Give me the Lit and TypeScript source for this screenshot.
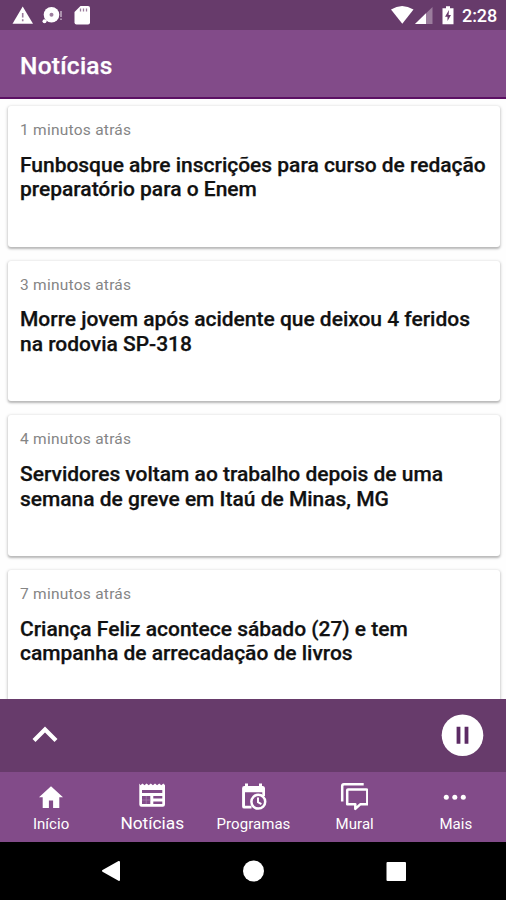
import { LitElement, html, css, svg } from "lit";
import { customElement } from "lit/decorators.js";
import { classMap } from "lit/directives/class-map.js";

const news = [
  { time: "1 minutos atrás", lines: ["Funbosque abre inscrições para curso de redação", "preparatório para o Enem"] },
  { time: "3 minutos atrás", lines: ["Morre jovem após acidente que deixou 4 feridos", "na rodovia SP-318"] },
  { time: "4 minutos atrás", lines: ["Servidores voltam ao trabalho depois de uma", "semana de greve em Itaú de Minas, MG"] },
  { time: "7 minutos atrás", lines: ["Criança Feliz acontece sábado (27) e tem", "campanha de arrecadação de livros"] },
];

const home = svg`<path d="M14 3.2 2 14.2h3.7V25h6.2v-7.5h4.2V25h6.2V14.2H26Z" fill="#fff"/>`;
const paper = svg`<path fill-rule="evenodd" fill="#fff" d="M1.300 .5l1.200 1.800 2-1.800 2 1.800 2.100-1.800 2.100 1.800 2.100-1.800 2.100 1.800 2.100-1.800 2.100 1.800 2.100-1.800 2.100 1.800 2.100-1.800 1.300 1.800L27 .5V21.500a2.200 2.200 0 0 1-2.200 2.200H3.500A2.200 2.200 0 0 1 1.300 21.500ZM4 7v3h20.300V7ZM4 13v8h8.300v-8ZM15.300 13v2.600h9V13ZM15.300 18.600v2.400h9v-2.400Z"/><path d="M4 17h8.300M8.200 13v8" stroke="#a57aab" stroke-width=".8"/>`;
const calendar = svg`<path fill-rule="evenodd" fill="#fff" d="M6 .5h3v2.500h11V.5h3v2.500h1A2.200 2.200 0 0 1 26 5.200V13h-2.700V9.200H6V22.800h6.500v2.800H5.300A2.200 2.200 0 0 1 3.100 23.400V5.200A2.200 2.200 0 0 1 5.300 3H6Z"/><circle cx="19.300" cy="18.700" r="6.900" fill="#824b89" stroke="#fff" stroke-width="2.500"/><path d="M19 14.400v4.800l3.400 1.900" fill="none" stroke="#fff" stroke-width="2"/>`;
const chat = svg`<path d="M2.200 18.500V3a1.700 1.700 0 0 1 1.700-1.700H23.700" fill="none" stroke="#fff" stroke-width="2.500"/><path d="M8 6.400h18.500a.8.8 0 0 1 .8.800V21.300H20.200L15.300 25.800v-4.500H7.200V7.200a.8.8 0 0 1 .8-.8Z" fill="none" stroke="#fff" stroke-width="2.500" stroke-linejoin="round"/>`;
const dots = svg`<circle cx="5.300" cy="14.200" r="2.500" fill="#fff"/><circle cx="13.800" cy="14.200" r="2.500" fill="#fff"/><circle cx="22.300" cy="14.200" r="2.500" fill="#fff"/>`;

const tabs = [
  { label: "Início", icon: home },
  { label: "Notícias", icon: paper, active: true },
  { label: "Programas", icon: calendar },
  { label: "Mural", icon: chat },
  { label: "Mais", icon: dots },
];

@customElement("news-card")
class NewsCard extends LitElement {
  static properties = { item: { attribute: false } };
  declare item: { time: string; lines: string[] };
  static styles = css`
    :host { display: block; box-sizing: border-box; height: 140.700px; padding: 13px 12px 0; background: #fff; border-radius: 3px; box-shadow: 0 1px 3px 1px rgba(0,0,0,.14), 0 1.500px 2px rgba(0,0,0,.16); }
    .time { font-size: 15.500px; line-height: 22px; letter-spacing: .25px; color: #858585; white-space: nowrap; }
    h2 { margin: 11.500px 0 0; font-size: 21px; line-height: 24.700px; font-weight: 500; letter-spacing: -.02px; color: #111; -webkit-text-stroke: .25px #111; white-space: nowrap; }
    h2 span { display: block; }
  `;
  render() {
    return html`<div class="time">${this.item.time}</div><h2>${this.item.lines.map((l) => html`<span>${l}</span>`)}</h2>`;
  }
}

@customElement("app-root")
class AppRoot extends LitElement {
  static styles = css`
    :host { display: flex; flex-direction: column; width: 506px; height: 900px; overflow: hidden; background: #fff; font-family: Roboto, sans-serif; color: #fff; }
    svg { display: block; }
    .status { flex: none; height: 30px; background: #673b6b; display: flex; justify-content: space-between; }
    .clock { width: 35px; font-size: 18px; line-height: 32px; font-weight: 500; letter-spacing: -.1px; white-space: nowrap; }
    .right { display: flex; width: 116px; }
    header { flex: none; box-sizing: border-box; height: 69px; padding-left: 20px; background: #824b89; border-bottom: 2px solid #5c1064; font-size: 24.500px; line-height: 72px; font-weight: 500; letter-spacing: .25px; -webkit-text-stroke: .25px #fff; }
    main { flex: none; height: 599.500px; box-sizing: border-box; padding: 7px 6.500px 0 8px; overflow: hidden; display: flex; flex-direction: column; gap: 14px; background: #fefefe; }
    news-card { flex: none; }
    .player { flex: none; height: 73.500px; box-sizing: border-box; padding: 0 22px 0 32px; background: #673b6b; display: flex; align-items: center; justify-content: space-between; }
    .chevron { margin-top: -2px; }
    nav { flex: none; height: 70px; background: #824b89; display: grid; grid-template-columns: repeat(5, 1fr); }
    .tab { display: flex; flex-direction: column; align-items: center; padding-top: 11px; }
    .tab span { font-size: 15px; line-height: 20px; margin-top: 3px; padding-left: 1px; letter-spacing: .05px; }
    .tab.active span { font-size: 17.300px; letter-spacing: 0; margin-top: 2px; }
    .system { flex: none; height: 58px; background: #000; }
  `;
  render() {
    return html`
      <div class="status">
        <svg width="100" height="30" viewBox="0 0 100 30">
          <path d="M22.700 6.500 33 23.700H12.500Z" fill="#fff"/><path d="M22.700 13v4.500m0 1.800v2" stroke="#9b7d9d" stroke-width="1.600"/>
          <circle cx="51.500" cy="14.800" r="7.800" fill="#fff"/><circle cx="51.500" cy="14.800" r="2" fill="#9b7d9d"/><circle cx="44.500" cy="21.300" r="2" fill="#fff"/><path d="M61 11v6m0 1.500v1.500" stroke="#c9b9ca" stroke-width="1.400"/>
          <path d="M80.500 6H88a2 2 0 0 1 2 2v14.500a2 2 0 0 1-2 2H76.500a2 2 0 0 1-2-2V12Z" fill="#fff"/><path d="M80.500 8.500v3m3-3v3m3-3v3" stroke="#9b7d9d" stroke-width="1.300"/>
        </svg>
        <div class="right">
          <svg width="72" height="30" viewBox="390 0 72 30">
            <path d="M391 9.500Q402 2.500 413.500 9.500L402.300 23.800Z" fill="#fff"/><path d="M432.500 7v17H415Z" fill="#9b7d9d"/><path d="M426 13.300V24H415Z" fill="#fff"/>
            <path d="M446 6.200h4v2h3.500v16h-11v-16h3.500Z" fill="#fff"/><path d="m449 10-4 6.700h2.500V21l3.500-6h-2.400Z" fill="#673b6b"/>
          </svg>
          <div class="clock">2:28</div>
        </div>
      </div>
      <header>Notícias</header>
      <main>${news.map((item) => html`<news-card .item=${item}></news-card>`)}</main>
      <section class="player">
        <svg class="chevron" width="26" height="18" viewBox="0 0 26 18"><path d="M2 15.500 13 4.500l11 11" fill="none" stroke="#fff" stroke-width="4.200"/></svg>
        <svg width="43" height="43" viewBox="0 0 43 43"><circle cx="21.500" cy="21.200" r="20.800" fill="#fff"/><path d="M17.500 12.700v17m8-17v17" stroke="#5c2a64" stroke-width="3.800"/></svg>
      </section>
      <nav>${tabs.map((t) => html`<div class=${classMap({ tab: true, active: !!t.active })}><svg width="28" height="28" viewBox="0 0 28 28">${t.icon}</svg><span>${t.label}</span></div>`)}</nav>
      <svg class="system" width="506" height="58" viewBox="0 842 506 58">
        <path d="M103 870.800 119 862v18Z" fill="#fff" stroke="#fff" stroke-width="2" stroke-linejoin="round"/><circle cx="253.500" cy="871" r="10.500" fill="#fff"/><rect x="386.500" y="862" width="19.500" height="19" rx="1" fill="#fff"/>
      </svg>
    `;
  }
}
